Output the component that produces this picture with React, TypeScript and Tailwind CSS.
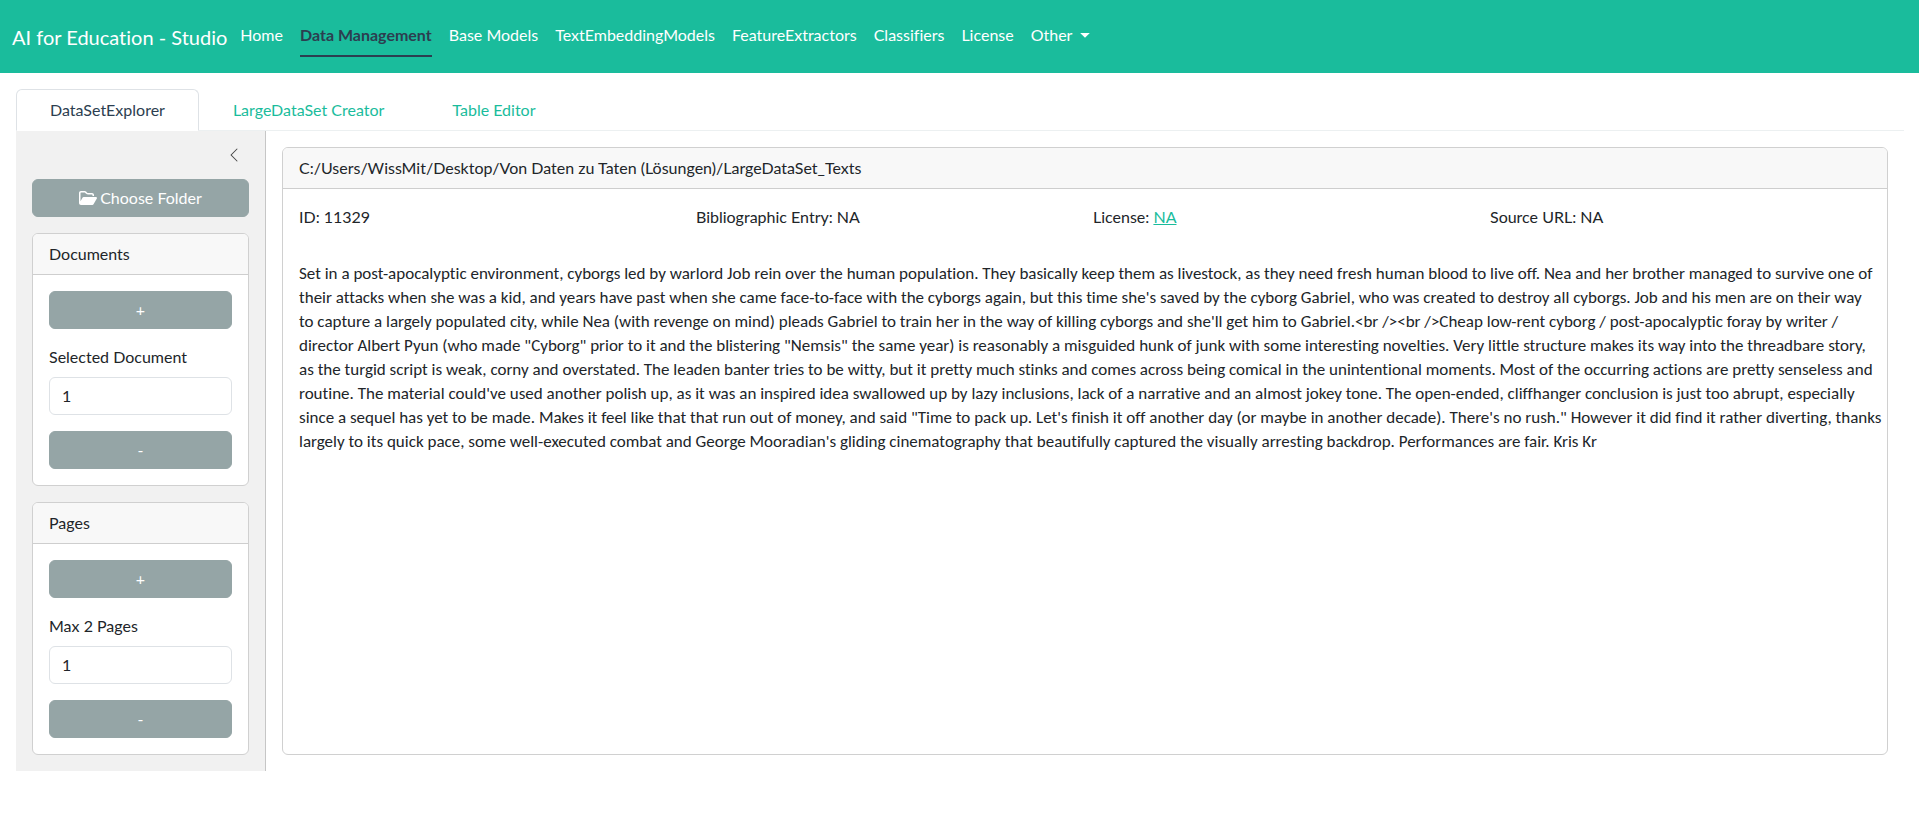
import { useId, useState } from "react";
import { BsChevronLeft } from "react-icons/bs";

const NAV_ITEMS = [
  "Home",
  "Data Management",
  "Base Models",
  "TextEmbeddingModels",
  "FeatureExtractors",
  "Classifiers",
  "License",
];

const TABS = ["DataSetExplorer", "LargeDataSet Creator", "Table Editor"];

const DOCUMENT_TEXT = `Set in a post-apocalyptic environment, cyborgs led by warlord Job rein over the human population. They basically keep them as livestock, as they need fresh human blood to live off. Nea and her brother managed to survive one of their attacks when she was a kid, and years have past when she came face-to-face with the cyborgs again, but this time she's saved by the cyborg Gabriel, who was created to destroy all cyborgs. Job and his men are on their way to\u00a0capture a largely populated city, while Nea (with revenge on mind) pleads Gabriel to train her in the way of killing cyborgs and she'll get him to Gabriel.<br /><br />Cheap low-rent cyborg / post-apocalyptic foray by writer / director Albert Pyun (who made "Cyborg" prior to it and the blistering "Nemsis" the same year) is reasonably a misguided hunk of junk with some interesting novelties. Very little structure makes its way into the threadbare story, as the turgid script is weak, corny and overstated. The leaden banter tries to be witty, but it pretty much stinks and comes across being comical in the unintentional moments. Most of the occurring actions are pretty senseless and routine. The material could've used another polish up, as it was an inspired idea swallowed up by lazy inclusions, lack of a narrative and an almost jokey tone. The open-ended, cliffhanger conclusion is just too abrupt, especially since a sequel has yet to be made. Makes it feel like that that run out of money, and said "Time to pack up. Let's finish it off another day (or maybe in another decade). There's no rush." However it did find it rather diverting, thanks largely to its quick pace, some well-executed combat and George Mooradian's gliding cinematography that beautifully captured the visually arresting backdrop. Performances are fair. Kris Kr`;

const BUTTON =
  "flex w-full cursor-pointer items-center justify-center gap-[3px] rounded-md border border-[#95a5a6] bg-[#95a5a6] py-1.5 text-white hover:bg-[#7f8c8d]";

function Navbar() {
  return (
    <header className="flex flex-wrap items-center gap-x-[13px] bg-[#1abc9c] px-3 py-[15px] text-white">
      <a href="#" className="text-xl leading-[30px]">
        AI for Education - Studio
      </a>
      <nav className="flex flex-wrap gap-x-[17px] pb-px">
        {NAV_ITEMS.map((item) => (
          <a
            key={item}
            href="#"
            className={
              item === "Data Management"
                ? "border-b-2 border-[#2c3e50] py-2 font-bold text-[#2c3e50]"
                : "border-b-2 border-transparent py-2"
            }
          >
            {item}
          </a>
        ))}
        <button
          type="button"
          aria-haspopup="menu"
          className="flex cursor-pointer items-center gap-2 border-b-2 border-transparent py-2"
        >
          Other
          <svg width="10" height="5" viewBox="0 0 10 5" fill="currentColor" aria-hidden="true">
            <path d="M0.2 0h9.6L5 4.8z" />
          </svg>
        </button>
      </nav>
    </header>
  );
}

function Tabs() {
  return (
    <div role="tablist" className="flex border-b border-[#ecf0f1]">
      {TABS.map((tab, i) => (
        <button
          key={tab}
          type="button"
          role="tab"
          aria-selected={i === 0}
          className={
            i === 0
              ? "-mb-px cursor-pointer rounded-t-md border border-[#dee2e6] border-b-white bg-white px-[33px] py-2 text-[#2c3e50]"
              : "-mb-px cursor-pointer rounded-t-md border border-transparent px-[33px] py-2 text-[#1abc9c]"
          }
        >
          {tab}
        </button>
      ))}
    </div>
  );
}

function FolderOpenIcon() {
  return (
    <svg width="18" height="16" viewBox="0 0 576 512" fill="currentColor" aria-hidden="true">
      <path d="M384 480h48c11.4 0 21.9-6 27.6-15.9l112-192c5.8-9.9 5.8-22.1 .1-32.1S555.5 224 544 224H144c-11.4 0-21.9 6-27.6 15.9L48 357.1V96c0-8.8 7.2-16 16-16H181.5c4.2 0 8.3 1.7 11.3 4.7l26.5 26.5c21 21 49.5 32.8 79.2 32.8H416c8.8 0 16 7.2 16 16v32h48V160c0-35.3-28.7-64-64-64H298.5c-17 0-33.3-6.7-45.3-18.7L226.7 50.7c-12-12-28.3-18.7-45.3-18.7H64C28.7 32 0 60.7 0 96V416c0 35.3 28.7 64 64 64H87.7 384z" />
    </svg>
  );
}

function Stepper({ title, label }: { title: string; label: string }) {
  const id = useId();
  const [value, setValue] = useState("1");
  const step = (by: number) => setValue(String(Math.max(1, (Number(value) || 1) + by)));
  return (
    <section className="overflow-hidden rounded-md border border-[#d0d0d0] bg-white">
      <h2 className="border-b border-[#cecece] bg-[#f8f8f8] px-4 py-2">{title}</h2>
      <div className="flex flex-col gap-4 p-4">
        <button type="button" className={BUTTON} onClick={() => step(1)}>
          +
        </button>
        <div className="flex flex-col gap-2">
          <label htmlFor={id}>{label}</label>
          <input
            id={id}
            type="text"
            inputMode="numeric"
            value={value}
            onChange={(e) => setValue(e.target.value)}
            className="w-full rounded-md border border-[#dee2e6] bg-white px-3 py-1.5"
          />
        </div>
        <button type="button" className={BUTTON} onClick={() => step(-1)}>
          -
        </button>
      </div>
    </section>
  );
}

function Sidebar() {
  return (
    <aside className="flex w-[250px] shrink-0 flex-col gap-4 border-r border-[#c6c6c6] bg-[#f1f1f1] p-4">
      <div className="flex justify-end px-[7px]">
        <button type="button" aria-label="Toggle sidebar" className="cursor-pointer text-[#444]">
          <BsChevronLeft size={16} />
        </button>
      </div>
      <button type="button" className={BUTTON}>
        <FolderOpenIcon />
        Choose Folder
      </button>
      <Stepper title="Documents" label="Selected Document" />
      <Stepper title="Pages" label="Max 2 Pages" />
    </aside>
  );
}

function DocumentCard() {
  return (
    <article className="flex grow flex-col overflow-hidden rounded-md border border-[#d0d0d0] bg-white">
      <h1 className="border-b border-[#cecece] bg-[#f8f8f8] px-4 py-2">
        C:/Users/WissMit/Desktop/Von Daten zu Taten (Lösungen)/LargeDataSet_Texts
      </h1>
      <div className="flex flex-col gap-[33px] py-4 pr-1 pl-4">
        <div className="grid grid-cols-4 gap-4 pr-3">
          <p>ID: 11329</p>
          <p>Bibliographic Entry: NA</p>
          <p>
            License:{" "}
            <a href="#" className="text-[#1abc9c] underline">
              NA
            </a>
          </p>
          <p>Source URL: NA</p>
        </div>
        <p className="font-['Carlito','Lato',sans-serif] text-[17px] leading-6">{DOCUMENT_TEXT}</p>
      </div>
    </article>
  );
}

export default function App() {
  return (
    <div className="min-h-screen bg-white font-['Lato',sans-serif] text-base text-[#212529] [font-variant-ligatures:no-common-ligatures]">
      <Navbar />
      <div className="pt-4 pr-[15px] pl-4">
        <Tabs />
        <div className="flex">
          <Sidebar />
          <main className="flex min-w-0 grow flex-col p-4">
            <DocumentCard />
          </main>
        </div>
      </div>
    </div>
  );
}
